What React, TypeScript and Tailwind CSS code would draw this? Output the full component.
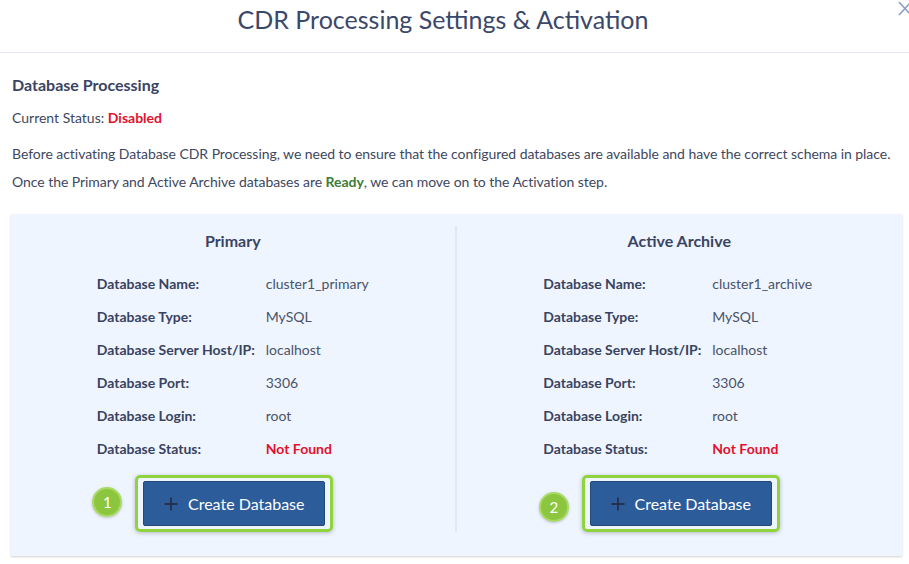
import React from 'react';

type Db = {
  title: string;
  name: string;
  step: number;
  badgeTop: string;
};

const databases: Db[] = [
  { title: 'Primary', name: 'cluster1_primary', step: 1, badgeTop: 'top-[6px]' },
  { title: 'Active Archive', name: 'cluster1_archive', step: 2, badgeTop: 'top-[11px]' },
];

const PlusIcon = () => (
  <svg width="14" height="14" viewBox="0 0 14 14" className="shrink-0">
    <path d="M7 0.5V13.5M0.5 7H13.5" stroke="#26314d" strokeWidth="1.8" />
  </svg>
);

const DbColumn = ({ db, divider }: { db: Db; divider: boolean }) => {
  const rows: [string, React.ReactNode][] = [
    ['Database Name:', db.name],
    ['Database Type:', 'MySQL'],
    ['Database Server Host/IP:', 'localhost'],
    ['Database Port:', '3306'],
    ['Database Login:', 'root'],
    ['Database Status:', <span className="font-bold text-[#e2112c]">Not Found</span>],
  ];

  return (
    <div className={`flex flex-col items-center pt-[5px] pb-[6px] ${divider ? 'border-r-2 border-[#e0e8f6]' : ''}`}>
      <h3 className="text-[16px] leading-[20px] font-bold text-[#3a4462]">{db.title}</h3>
      <div className="mt-[16px] grid grid-cols-[169px_103px] text-[14px] leading-[33px]">
        {rows.map(([label, value], idx) => (
          <React.Fragment key={idx}>
            <div className="font-bold text-[#39435f] whitespace-nowrap">{label}</div>
            <div className="text-[#4a5368] whitespace-nowrap">{value}</div>
          </React.Fragment>
        ))}
      </div>
      <div className="relative mt-[16px] ml-[3px]">
        {/* step highlight */}
        <div className="absolute -inset-x-[8px] -inset-y-[6px] rounded-[5px] border-[3px] border-[#8fd43f] shadow-[0_1px_4px_rgba(0,0,0,0.25)]" />
        <div className={`absolute -left-[51px] ${db.badgeTop} flex h-[30px] w-[30px] items-center justify-center rounded-full border-2 border-[#a9db62] bg-[#8cc63f] text-[15px] text-white shadow-[0_1px_3px_rgba(0,0,0,0.2)]`}>
          {db.step}
        </div>
        <button className="relative flex h-[45px] w-[182px] items-center justify-center gap-[10px] rounded-[2px] border border-[#22497c] bg-[#2c5c9a] text-[16px] text-white">
          <PlusIcon />
          <span>Create Database</span>
        </button>
      </div>
    </div>
  );
};

export default function App() {
  return (
    <div className="relative h-[564px] w-[909px] overflow-hidden bg-white font-[family-name:Lato,'Liberation_Sans',sans-serif] text-[#3e4760]">
      <header className="flex h-[53px] items-start justify-center border-b border-[#e4e9f1] pr-[23px]">
        <h1 className="pt-[4px] text-[25px] leading-[30px] text-[#3b4869]">CDR Processing Settings &amp; Activation</h1>
      </header>
      <svg width="14" height="15" viewBox="0 0 14 15" className="absolute right-[-3px] top-[1px]">
        <path d="M1 1L13 14M13 1L1 14" stroke="#8b9dc4" strokeWidth="1.6" />
      </svg>

      <div className="px-[12px] pt-[22px]">
        <h2 className="text-[16px] leading-[20px] font-bold text-[#3a4462]">Database Processing</h2>
        <p className="mt-[13px] text-[14px] leading-[20px]">
          Current Status: <span className="font-bold text-[#e2112c]">Disabled</span>
        </p>
        <p className="mt-[12px] whitespace-nowrap text-[14px] leading-[28px] tracking-[-0.05px]">
          Before activating Database CDR Processing, we need to ensure that the configured databases are available and have the correct schema in place.
        </p>
        <p className="whitespace-nowrap text-[14px] leading-[28px] tracking-[-0.05px]">
          Once the Primary and Active Archive databases are <span className="font-bold text-[#3f7c36]">Ready</span>, we can move on to the Activation step.
        </p>
      </div>

      <div className="mx-[11px] mt-[18px] grid w-[891px] grid-cols-2 bg-[#eef5ff] py-[12px] pb-[24px] shadow-[0_1px_2px_rgba(0,0,0,0.18)]">
        {databases.map((db, idx) => (
          <DbColumn key={db.title} db={db} divider={idx === 0} />
        ))}
      </div>
    </div>
  );
}
